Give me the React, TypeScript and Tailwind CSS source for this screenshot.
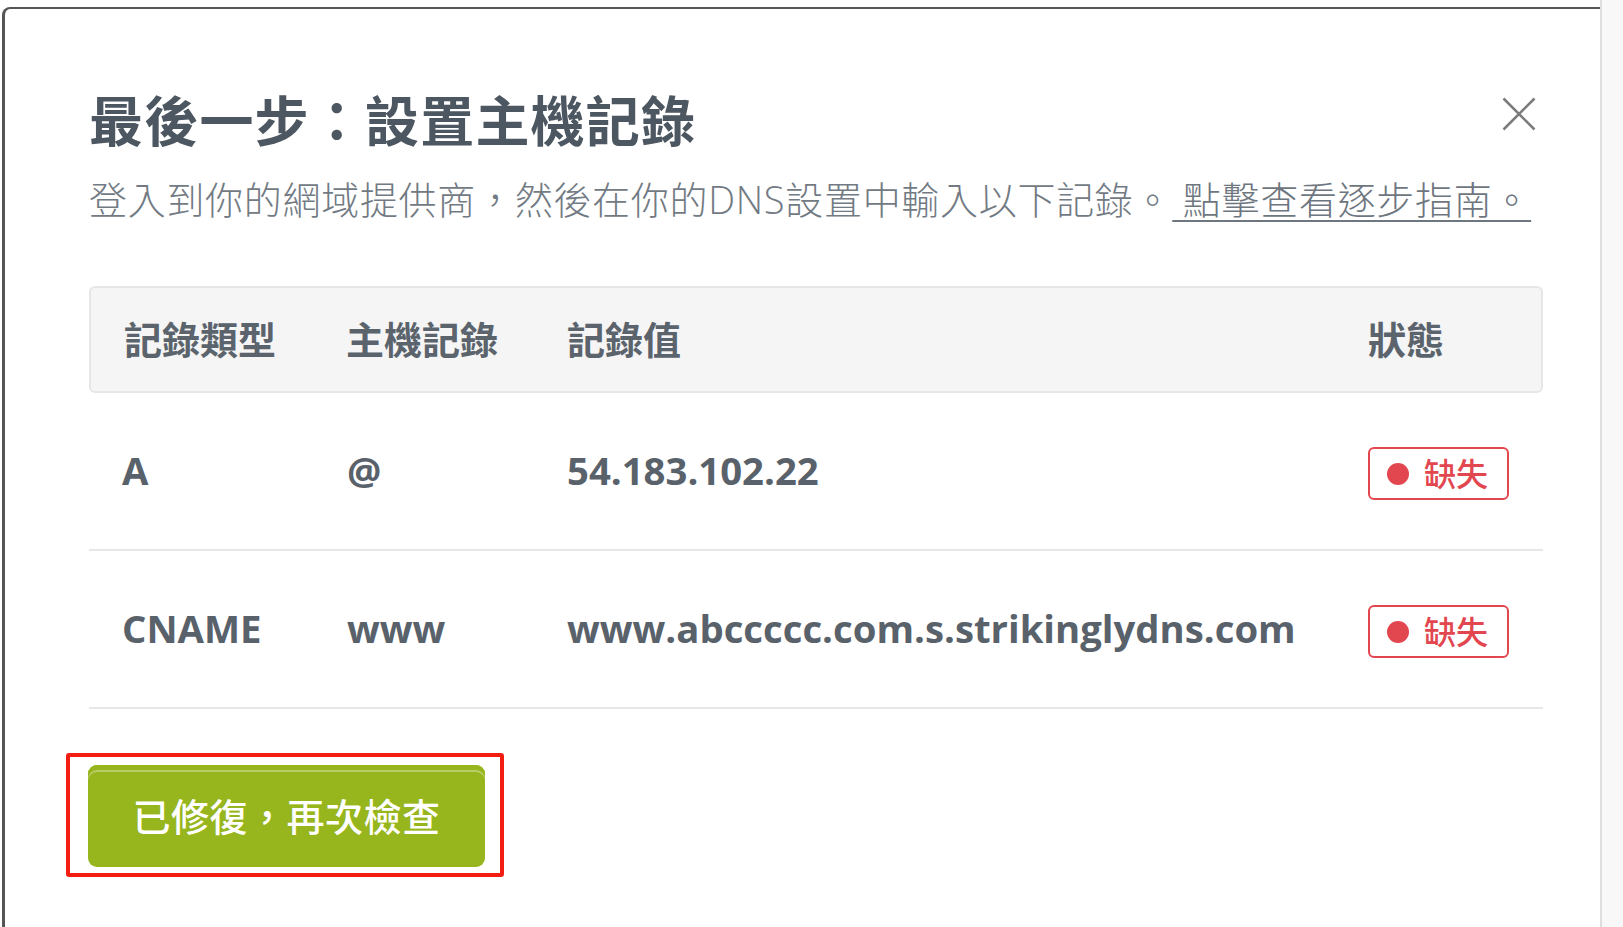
import React from "react";

function Badge() {
  return (
    <div className="inline-flex items-center h-[53px] w-[141px] border-2 border-[#e2474f] rounded-[6px] pl-[17px] gap-[15px] bg-white">
      <span className="block w-[22px] h-[22px] rounded-full bg-[#e2474f]" />
      <span className="text-[32px] leading-none text-[#e2474f] font-medium">缺失</span>
    </div>
  );
}

function Row({ type, host, value }: { type: string; host: string; value: string }) {
  return (
    <div className="grid grid-cols-[225px_220px_801px_1fr] items-center h-[158px] border-b-2 border-[#e7e7e9] pl-[33px] text-[38.3px] font-bold text-[#59626b]">
      <div>{type}</div>
      <div>{host}</div>
      <div className="whitespace-nowrap">{value}</div>
      <div>
        <Badge />
      </div>
    </div>
  );
}

export default function App() {
  return (
    <div
      lang="zh-TW"
      className="w-[1623px] h-[927px] flex bg-white overflow-hidden font-['Open_Sans','Noto_Sans_CJK_TC',sans-serif]"
    >
      <div className="flex-1 flex flex-col pt-[7px] pl-[2px]">
        <div className="flex-1 bg-white border-l-[3px] border-t-2 border-[#555555] rounded-tl-[8px] pl-[84px] pr-[57px]">
          <div className="mt-[80px] flex items-start justify-between">
            <h1 className="text-[54px] leading-[64px] font-bold text-[#4d5761] tracking-[1.2px]">
              最後一步：設置主機記錄
            </h1>
            <svg
              className="mt-[8px] mr-[7px]"
              width="34"
              height="34"
              viewBox="0 0 34 34"
              fill="none"
              stroke="#7b7b7b"
              strokeWidth="2.6"
            >
              <path d="M1.5 1.5 L32.5 32.5 M32.5 1.5 L1.5 32.5" />
            </svg>
          </div>
          <p className="mt-[22px] text-[38px] leading-[48px] font-light text-[#727a83] whitespace-nowrap tracking-[0.7px]">
            登入到你的網域提供商，然後在你的DNS設置中輸入以下記錄。
            <a className="underline decoration-2 underline-offset-[6px] text-[#6e7680]"> 點擊查看逐步指南。</a>
          </p>

          <div className="mt-[63px]">
            <div className="grid grid-cols-[222px_221px_801px_1fr] items-center h-[107px] border-2 border-[#e6e6e8] bg-[#f5f5f5] rounded-[6px] pl-[33px] text-[38px] font-bold text-[#5b646d]">
              <div>記錄類型</div>
              <div>主機記錄</div>
              <div>記錄值</div>
              <div>狀態</div>
            </div>
            <Row type="A" host="@" value="54.183.102.22" />
            <Row type="CNAME" host="www" value="www.abccccc.com.s.strikinglydns.com" />
          </div>

          <div className="mt-[44px] -ml-[23px] inline-flex border-4 border-[#f41d12] rounded-[3px] pt-[8px] pl-[18px] pr-[15px] pb-[6px]">
            <button className="w-[397px] h-[102px] rounded-[9px] bg-[#97b51c] text-white text-[38px] font-medium tracking-[0.5px] flex items-center justify-center shadow-[inset_0_5px_0_0_#97b51c,inset_0_7px_0_0_#b9ce66]">
              已修復，再次檢查
            </button>
          </div>
        </div>
      </div>
      <div className="w-[23px] border-l-2 border-[#dedede] bg-[#f8f8f8]" />
    </div>
  );
}
